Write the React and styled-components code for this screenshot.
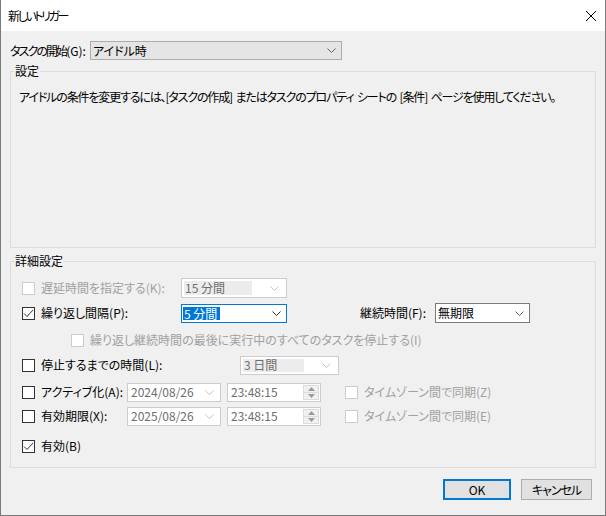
import React from 'react';
import styled, { createGlobalStyle } from 'styled-components';

const GlobalStyle = createGlobalStyle`
  html, body {
    margin: 0;
    padding: 0;
    background: #ffffff;
  }

  body {
    font-family: 'Noto Sans CJK JP', 'Noto Sans', sans-serif;
    font-size: 12px;
    color: #000;
  }

  * {
    box-sizing: border-box;
  }
`;

const Window = styled.div`
  display: flex;
  flex-direction: column;

  width: 606px;
  height: 516px;
  border: 1px solid #7a7a7a;
  border-top: none;
  background: #f0f0f0;
  font-feature-settings: 'palt';
  line-height: 16px;
`;

const TitleBar = styled.div`
  display: flex;
  flex: none;
  justify-content: space-between;
  align-items: center;

  height: 31px;
  padding: 0 9px 0 7px;
  background: #ffffff;
`;

const Title = styled.span`
  letter-spacing: -2.4px;
`;

const Body = styled.div`
  display: flex;
  flex-direction: column;
  padding: 10px 9px 0 9px;
`;

const TopRow = styled.div`
  display: flex;
  align-items: center;
  height: 19px;
`;

const Kana = styled.span`
  letter-spacing: -1.9px;
`;

const Group = styled.fieldset`
  min-width: 0;
  height: ${({ $height }) => $height}px;
  margin: ${({ $top }) => $top}px 0 0 0;
  padding: 0;
  border: 1px solid #dcdcdc;
`;

const Legend = styled.legend`
  margin-left: 3px;
  padding: 0 1px;
  line-height: 14px;
`;

const Note = styled.p`
  margin: 11px 0 0 8px;
  letter-spacing: -1.15px;
  word-spacing: 2px;
  white-space: nowrap;
`;

const Options = styled.div`
  display: flex;
  flex-direction: column;
  padding: 10px 0 0 11px;
`;

const Row = styled.div`
  display: flex;
  align-items: center;
  height: 20px;
  margin-top: ${({ $gap = 0 }) => $gap}px;
  padding-left: ${({ $indent = 0 }) => $indent}px;
`;

const Label = styled.span`
  flex: none;
  width: ${({ $width }) => ($width ? `${$width}px` : 'auto')};
  margin-left: ${({ $left = 6 }) => $left}px;
  padding-right: ${({ $pad = 0 }) => $pad}px;
  text-align: ${({ $align = 'left' }) => $align};
  color: ${({ $off }) => ($off ? '#a0a0a0' : '#000')};
  white-space: nowrap;
`;

const Box = styled.span`
  display: flex;
  flex: none;
  justify-content: center;
  align-items: center;

  width: 13px;
  height: 13px;
  margin-left: ${({ $left = 0 }) => $left}px;
  border: 1px solid ${({ $off }) => ($off ? '#cccccc' : '#333333')};
  background: #ffffff;
`;

const Combo = styled.div`
  display: flex;
  flex: none;
  align-items: center;

  width: ${({ $width }) => $width}px;
  height: ${({ $height = 19 }) => $height}px;
  margin-left: ${({ $left = 0 }) => $left}px;
  padding: ${({ $inset }) => ($inset ? '2px' : '0 0 0 2px')};
  border: 1px solid ${({ $border }) => $border};
  background: ${({ $bg }) => $bg};
`;

const ComboText = styled.span`
  display: flex;
  flex: 1;
  align-self: stretch;
  align-items: center;

  margin-right: ${({ $inset }) => ($inset ? '18px' : '0')};
  padding-left: ${({ $inset }) => ($inset ? '1px' : '0')};
  background: ${({ $inset }) => ($inset ? '#ececec' : 'transparent')};
  color: ${({ $off }) => ($off ? '#6d6d6d' : '#000')};
`;

const Selected = styled.span`
  display: inline-block;
  flex: none;
  width: 37px;
  height: 13px;
  margin-left: -1px;
  padding-left: 1px;
  background: #0078d7;
  color: #ffffff;
  line-height: 13px;
  white-space: nowrap;
`;

const Arrow = styled.svg`
  flex: none;
  margin-right: 5px;
`;

const Field = styled.div`
  display: flex;
  flex: none;
  align-items: center;

  width: 94px;
  height: 19px;
  margin-left: ${({ $left = 0 }) => $left}px;
  padding: 1px 1px 1px 3px;
  border: 1px solid #cccccc;
  background: #ffffff;
  color: #6d6d6d;
`;

const FieldText = styled.span`
  flex: 1;
`;

const Spin = styled.div`
  display: flex;
  flex-direction: column;
  width: 16px;
  height: 15px;
  border: 1px solid #dcdcdc;
  background: #f0f0f0;
`;

const SpinHalf = styled.div`
  display: flex;
  flex: 1;
  justify-content: center;
  align-items: center;

  & + & {
    border-top: 1px solid #dcdcdc;
  }
`;

const Buttons = styled.div`
  display: flex;
  justify-content: flex-end;
  gap: 10px;
  margin: 11px 4px 0 0;
`;

const Button = styled.button`
  width: ${({ $width }) => $width}px;
  height: 21px;
  padding: 0;
  border: ${({ $primary }) => ($primary ? '2px solid #0078d7' : '1px solid #adadad')};
  background: #e1e1e1;
  font: inherit;
  letter-spacing: ${({ $tight = 0 }) => $tight}px;
  color: #000;
`;

const Chevron = ({ color = '#606060' }) => (
  <Arrow width="9" height="5" viewBox="0 0 9 5">
    <path d="M0.5 0.5 L4.5 4.5 L8.5 0.5" fill="none" stroke={color} strokeWidth="1" />
  </Arrow>
);

const Check = ({ checked, off }) => (
  <Box $off={off}>
    {checked && (
      <svg width="11" height="11" viewBox="0 0 11 11">
        <path d="M1 5.5 L4 8.5 L10 2" fill="none" stroke="#333" strokeWidth="1" />
      </svg>
    )}
  </Box>
);

const TimeField = ({ value, left }) => (
  <Field $left={left}>
    <FieldText>{value}</FieldText>
    <Spin>
      <SpinHalf>
        <svg width="7" height="4" viewBox="0 0 7 4">
          <path d="M3.5 0 L7 4 L0 4 Z" fill="#9a9a9a" />
        </svg>
      </SpinHalf>
      <SpinHalf>
        <svg width="7" height="4" viewBox="0 0 7 4">
          <path d="M0 0 L7 0 L3.5 4 Z" fill="#9a9a9a" />
        </svg>
      </SpinHalf>
    </Spin>
  </Field>
);

const DateField = ({ value }) => (
  <Field>
    <FieldText>{value}</FieldText>
    <Chevron color="#c4c4c4" />
  </Field>
);

const App = () => (
  <>
    <GlobalStyle />
    <Window>
      <TitleBar>
        <Title>新しいトリガー</Title>
        <svg width="10" height="10" viewBox="0 0 10 10">
          <path d="M0 0 L10 10 M10 0 L0 10" stroke="#000" strokeWidth="1" />
        </svg>
      </TitleBar>
      <Body>
        <TopRow>
          <Label $left={0} $pad={4}>
            <Kana>タスクの開始</Kana>(G):
          </Label>
          <Combo $width={252} $border="#adadad" $bg="#e5e5e5">
            <ComboText>アイドル時</ComboText>
            <Chevron />
          </Combo>
        </TopRow>

        <Group $top={4} $height={184}>
          <Legend>設定</Legend>
          <Note>
            アイドルの条件を変更するには、[タスクの作成] またはタスクのプロパティ シートの [条件] ページを使用してください。
          </Note>
        </Group>

        <Group $top={6} $height={214}>
          <Legend>詳細設定</Legend>
          <Options>
            <Row>
              <Check off />
              <Label $off $width={140}>
                遅延時間を指定する(K):
              </Label>
              <Combo $width={106} $height={20} $border="#cccccc" $bg="#ffffff" $inset>
                <ComboText $inset $off>
                  15 分間
                </ComboText>
                <Chevron color="#c4c4c4" />
              </Combo>
            </Row>

            <Row $gap={5}>
              <Check checked />
              <Label $width={140}>繰り返し間隔(P):</Label>
              <Combo $width={106} $border="#0078d7" $bg="#ffffff">
                <ComboText>
                  <Selected>5 分間</Selected>
                </ComboText>
                <Chevron color="#333333" />
              </Combo>
              <Label $left={0} $width={148} $align="right" $pad={9}>
                継続時間(F):
              </Label>
              <Combo $width={95} $height={20} $border="#7a7a7a" $bg="#ffffff">
                <ComboText>無期限</ComboText>
                <Chevron />
              </Combo>
            </Row>

            <Row $gap={7} $indent={49}>
              <Check off />
              <Label $off>繰り返し継続時間の最後に実行中のすべてのタスクを停止する(I)</Label>
            </Row>

            <Row $gap={5}>
              <Check />
              <Label $width={199}>停止するまでの時間(L):</Label>
              <Combo $width={99} $border="#cccccc" $bg="#ffffff" $inset>
                <ComboText $inset $off>
                  3 日間
                </ComboText>
                <Chevron color="#c4c4c4" />
              </Combo>
            </Row>

            <Row $gap={7}>
              <Check />
              <Label $width={86}>アクティブ化(A):</Label>
              <DateField value="2024/08/26" />
              <TimeField value="23:48:15" left={6} />
              <Box $off $left={24} />
              <Label $off>タイムゾーン間で同期(Z)</Label>
            </Row>

            <Row $gap={4}>
              <Check />
              <Label $width={86}>有効期限(X):</Label>
              <DateField value="2025/08/26" />
              <TimeField value="23:48:15" left={6} />
              <Box $off $left={24} />
              <Label $off>タイムゾーン間で同期(E)</Label>
            </Row>

            <Row $gap={10}>
              <Check checked />
              <Label>有効(B)</Label>
            </Row>
          </Options>
        </Group>

        <Buttons>
          <Button $primary $width={68}>
            OK
          </Button>
          <Button $width={71} $tight={-1}>
            キャンセル
          </Button>
        </Buttons>
      </Body>
    </Window>
  </>
);

export default App;
